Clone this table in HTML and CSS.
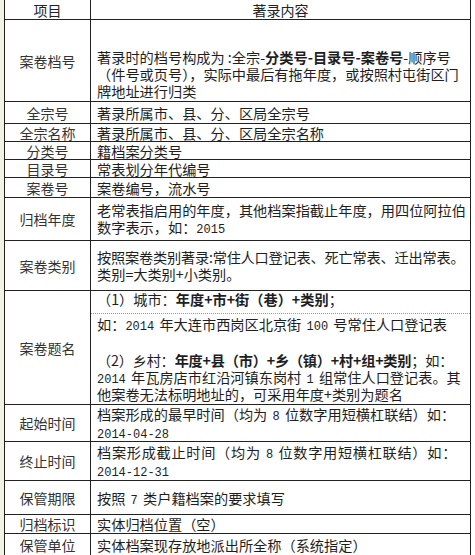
FILE: index.html
```html
<!DOCTYPE html>
<html lang="zh-CN">
<head>
<meta charset="utf-8">
<title>著录项目</title>
<link rel="stylesheet" href="styles.css">
</head>
<body>
<div class="sheet">
  <div class="grid">
    <div class="c l h">项目</div>
    <div class="c r h ctr">著录内容</div>

    <div class="c l">案卷档号</div>
    <div class="c r multi end">
      <span class="ln">著录时的档号构成为 :全宗-<b>分类号-目录号-案卷号</b>-顺序号</span>
      <span class="ln">（件号或页号），实际中最后有拖年度，或按照村屯街区门</span>
      <span class="ln">牌地址进行归类</span>
    </div>

    <div class="c l">全宗号</div>
    <div class="c r"><span class="ln">著录所属市、县、分、区局全宗号</span></div>

    <div class="c l">全宗名称</div>
    <div class="c r"><span class="ln">著录所属市、县、分、区局全宗名称</span></div>

    <div class="c l">分类号</div>
    <div class="c r"><span class="ln">籍档案分类号</span></div>

    <div class="c l">目录号</div>
    <div class="c r"><span class="ln">常表划分年代编号</span></div>

    <div class="c l">案卷号</div>
    <div class="c r"><span class="ln">案卷编号，流水号</span></div>

    <div class="c l">归档年度</div>
    <div class="c r multi">
      <span class="ln">老常表指启用的年度，其他档案指截止年度，用四位阿拉伯</span>
      <span class="ln">数字表示，如：<span class="num">2015</span></span>
    </div>

    <div class="c l">案卷类别</div>
    <div class="c r multi">
      <span class="ln tight">按照案卷类别著录:常住人口登记表、死亡常表、迁出常表。</span>
      <span class="ln">类别=大类别+小类别。</span>
    </div>

    <div class="c l">案卷题名</div>
    <div class="c r title">
      <div class="part1"><span class="ln">（1）城市：<b>年度+市+街（巷）+类别</b>；</span></div>
      <span class="ln eg">如：<span class="num">2014 </span>年大连市西岗区北京街<span class="num"> 100 </span>号常住人口登记表</span>
      <div class="part2">
        <span class="ln tight">（2）乡村：<b>年度+县（市）+乡（镇）+村+组+类别</b>；如：</span>
        <span class="ln"><span class="num">2014 </span>年瓦房店市红沿河镇东岗村<span class="num"> 1 </span>组常住人口登记表。其</span>
        <span class="ln">他案卷无法标明地址的，可采用年度+类别为题名</span>
      </div>
    </div>

    <div class="c l">起始时间</div>
    <div class="c r multi">
      <span class="ln">档案形成的最早时间（均为<span class="num"> 8 </span>位数字用短横杠联结）如：</span>
      <span class="ln date"><span class="num">2014-04-28</span></span>
    </div>

    <div class="c l">终止时间</div>
    <div class="c r multi">
      <span class="ln wide">档案形成截止时间（均为<span class="num"> 8 </span>位数字用短横杠联结）如：</span>
      <span class="ln date"><span class="num">2014-12-31</span></span>
    </div>

    <div class="c l">保管期限</div>
    <div class="c r"><span class="ln">按照<span class="num"> 7 </span>类户籍档案的要求填写</span></div>

    <div class="c l">归档标识</div>
    <div class="c r"><span class="ln">实体归档位置（空）</span></div>

    <div class="c l">保管单位</div>
    <div class="c r"><span class="ln">实体档案现存放地派出所全称（系统指定）</span></div>
  </div>
</div>
</body>
</html>
```

FILE: styles.css
```css
html, body {
  margin: 0;
  padding: 0;
  background: #ffffff;
}

body {
  width: 475px;
  height: 555px;
  overflow: hidden;
  font-family: "Noto Sans CJK SC", "Noto Sans", sans-serif;
  color: #1e1e1e;
}

.sheet {
  border-left: 4px solid #f4f2e3;
  height: 555px;
}

.grid {
  display: grid;
  width: 465px;
  grid-template-columns: 86px 379px;
  grid-template-rows: 20px 82px 22px 18px 18px 18px 20px 43px 50px 114px 37px 39px 34px 19px 22px;
  border-left: 1px solid #222;
  border-right: 1px solid #222;
}

.c {
  box-sizing: border-box;
  border-bottom: 1px solid #222;
  display: flex;
  align-items: center;
  white-space: nowrap;
  min-width: 0;
}

.l {
  border-right: 1px solid #222;
  justify-content: center;
  font-size: 14px;
  line-height: 16px;
  color: #333;
}

.r {
  padding-left: 6px;
  font-size: 14.2px;
  line-height: 16px;
}

.h {
  font-size: 14px;
  color: #222;
}

.ctr {
  justify-content: center;
  padding-left: 0;
}

.multi {
  flex-direction: column;
  align-items: flex-start;
  justify-content: center;
}

.multi .ln {
  line-height: 17px;
}

.end {
  justify-content: flex-end;
  padding-bottom: 1px;
}

.ln {
  display: block;
  white-space: nowrap;
}

.tight {
  letter-spacing: -0.2px;
}

.wide {
  letter-spacing: 0.7px;
}

b {
  font-weight: 700;
}

.num {
  font-family: "Liberation Mono", "DejaVu Sans Mono", monospace;
  font-size: 12px;
  line-height: 0;
  letter-spacing: 0;
  word-spacing: -2px;
  white-space: pre;
}

.date {
  padding-top: 1px;
}

.title {
  flex-direction: column;
  align-items: stretch;
  justify-content: flex-start;
  padding-left: 0;
}

.title .ln {
  padding-left: 6px;
  line-height: 17px;
}

.part1 {
  height: 23px;
  padding-top: 0;
  box-sizing: border-box;
  border-bottom: 1px dotted #9a9a9a;
}

.eg {
  padding-top: 2px;
}

.part2 {
  margin-top: 19px;
}
```
